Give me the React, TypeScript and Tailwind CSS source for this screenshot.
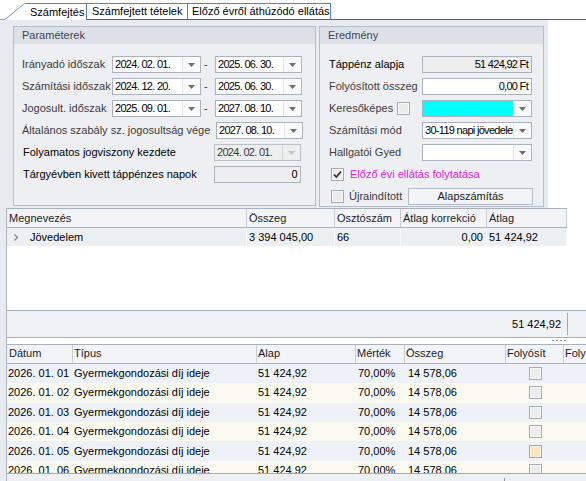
import type { ReactNode } from "react";

const DETAIL_ROWS = [
  { date: "2026. 01. 01", hot: false },
  { date: "2026. 01. 02", hot: false },
  { date: "2026. 01. 03", hot: false },
  { date: "2026. 01. 04", hot: false },
  { date: "2026. 01. 05", hot: true },
  { date: "2026. 01. 06", hot: false },
];

function DropArrow({ disabled }: { disabled?: boolean }) {
  return (
    <div
      className={`flex w-[18px] shrink-0 items-center justify-center border-l ${
        disabled ? "border-[#d3d6db] bg-[#eeeeee]" : "border-[#e4e6ea] bg-[#fafafa]"
      }`}
    >
      <svg width="7" height="4" viewBox="0 0 7 4">
        <path d="M0 0h7L3.5 4z" fill={disabled ? "#c4c4c4" : "#6e6e6e"} />
      </svg>
    </div>
  );
}

function Combo({
  value,
  className,
  disabled,
  fill = "bg-white",
}: {
  value?: string;
  className: string;
  disabled?: boolean;
  fill?: string;
}) {
  return (
    <div
      className={`flex h-[17px] shrink-0 border ${
        disabled ? "border-[#bcc1c8] text-[#3a3a3a]" : "border-[#abb2bc] text-black"
      } ${className}`}
    >
      <div
        className={`flex min-w-0 flex-1 items-center overflow-hidden whitespace-nowrap pl-[2px] tracking-[-0.7px] ${
          disabled ? "bg-[#eeeeee]" : fill
        }`}
      >
        {value}
      </div>
      <DropArrow disabled={disabled} />
    </div>
  );
}

function NumberBox({
  value,
  className,
  readOnly,
}: {
  value: string;
  className: string;
  readOnly?: boolean;
}) {
  return (
    <div
      className={`flex h-[17px] shrink-0 items-center justify-end border border-[#abb2bc] pr-[3px] tracking-[-0.7px] text-black ${
        readOnly ? "bg-[#eeeeee]" : "bg-white"
      } ${className}`}
    >
      {value}
    </div>
  );
}

function Check({ checked, hot }: { checked?: boolean; hot?: boolean }) {
  return (
    <div
      className={`flex h-[13px] w-[13px] shrink-0 items-center justify-center border ${
        hot
          ? "border-[#e39a3c] bg-[#fde6bd] shadow-[inset_0_0_0_1px_#fff4df]"
          : "border-[#a7acb3] bg-[#ececec] shadow-[inset_0_0_0_1px_#f8f8f8]"
      }`}
    >
      {checked && (
        <svg width="9" height="9" viewBox="0 0 9 9">
          <path d="M1 4.5l2.3 2.5L8 1.5" fill="none" stroke="#2b2b2b" strokeWidth="1.6" />
        </svg>
      )}
    </div>
  );
}

function GroupBox({
  title,
  className,
  children,
}: {
  title: string;
  className: string;
  children: ReactNode;
}) {
  return (
    <div className={`flex flex-col border border-[#b7bdc6] bg-[#edeff2] ${className}`}>
      <div className="flex h-[17px] shrink-0 items-center bg-[#dde1e7] pl-[8px] text-[#3e4550]">
        {title}
      </div>
      {children}
    </div>
  );
}

function TabStrip() {
  return (
    <div className="flex h-[20px] items-end bg-white">
      <div className="h-px w-[5px] bg-[#8fa2bf]" />
      <div className="flex h-[17px] items-stretch">
        <svg width="20" height="17" viewBox="0 0 20 17" className="shrink-0">
          <path d="M0 17L19.5 0.5H20V17z" fill="#ffffff" />
          <path d="M0 16.5L19.5 0.5" stroke="#7f95b8" strokeWidth="1" fill="none" />
        </svg>
        <div className="flex w-[62px] items-center border-t border-r border-[#5a7fbe] bg-white pl-[5px] text-black">
          Számfejtés
        </div>
      </div>
      <div className="flex h-[17px] w-[101px] items-center border-y border-r border-[#5a7fbe] border-b-[#3c63a6] bg-white pl-[5px] text-black">
        Számfejtett tételek
      </div>
      <div className="flex h-[17px] w-[143px] items-center border-y border-r border-[#5a7fbe] border-b-[#3c63a6] bg-white pl-[4px] text-black">
        Előző évről áthúzódó ellátás
      </div>
      <div className="h-px flex-1 bg-[#3c63a6]" />
    </div>
  );
}

function ParamsBox() {
  const periods = [
    ["Irányadó időszak", "2024. 02. 01.", "2025. 06. 30."],
    ["Számítási időszak", "2024. 12. 20.", "2025. 06. 30."],
    ["Jogosult. időszak", "2025. 09. 01.", "2027. 08. 10."],
  ];

  return (
    <GroupBox title="Paraméterek" className="h-[180px] w-[303px]">
      <div className="flex flex-col gap-[5px] pl-[8px] pr-[12px] pt-[12px]">
        {periods.map(([label, from, to]) => (
          <div key={label} className="flex h-[17px] items-center">
            <span className="w-[90px] whitespace-nowrap text-[#3c3c3c]">{label}</span>
            <Combo value={from} className="w-[89px]" />
            <span className="w-[14px] pl-[3px] text-[#3c3c3c]">-</span>
            <Combo value={to} className="w-[87px]" />
          </div>
        ))}
        <div className="flex h-[17px] items-center">
          <span className="flex-1 whitespace-nowrap text-[#3c3c3c]">
            Általános szabály sz. jogosultság vége
          </span>
          <Combo value="2027. 08. 10." className="w-[87px]" />
        </div>
        <div className="flex h-[17px] items-center">
          <span className="flex-1 whitespace-nowrap pl-[1px] text-black">
            Folyamatos jogviszony kezdete
          </span>
          <Combo value="2024. 02. 01." className="mr-[2px] w-[87px]" disabled />
        </div>
        <div className="flex h-[17px] items-center">
          <span className="flex-1 whitespace-nowrap pl-[1px] text-black">
            Tárgyévben kivett táppénzes napok
          </span>
          <NumberBox value="0" className="mr-[2px] w-[87px]" readOnly />
        </div>
      </div>
    </GroupBox>
  );
}

function ResultBox() {
  return (
    <GroupBox title="Eredmény" className="h-[181px] w-[225px]">
      <div className="flex flex-col pl-[9px] pr-[10px] pt-[12px]">
        <div className="flex flex-col gap-[5px]">
          <div className="flex h-[17px] items-center">
            <span className="w-[93px] whitespace-nowrap text-black">Táppénz alapja</span>
            <NumberBox value="51 424,92 Ft" className="w-[110px]" readOnly />
          </div>
          <div className="flex h-[17px] items-center">
            <span className="w-[93px] whitespace-nowrap text-[#3c3c3c]">Folyósított összeg</span>
            <NumberBox value="0,00 Ft" className="w-[110px]" />
          </div>
          <div className="flex h-[17px] items-center">
            <span className="w-[68px] whitespace-nowrap text-[#3c3c3c]">Keresőképes</span>
            <Check />
            <span className="w-[12px]" />
            <Combo className="w-[110px]" fill="bg-[#00ffff]" />
          </div>
          <div className="flex h-[17px] items-center">
            <span className="w-[93px] whitespace-nowrap text-[#3c3c3c]">Számítási mód</span>
            <Combo value="30-119 napi jövedelem" className="w-[110px]" />
          </div>
          <div className="flex h-[17px] items-center">
            <span className="w-[93px] whitespace-nowrap text-[#3c3c3c]">Hallgatói Gyed</span>
            <Combo className="w-[110px]" />
          </div>
        </div>
        <div className="mt-[7px] flex h-[13px] items-center gap-[6px] pl-[2px]">
          <Check checked />
          <span className="whitespace-nowrap text-[#dd1fdd]">Előző évi ellátás folytatása</span>
        </div>
        <div className="mt-[7px] flex h-[17px] items-center pl-[2px]">
          <Check />
          <span className="ml-[5px] whitespace-nowrap text-[#3c3c3c]">Újraindított</span>
          <button
            type="button"
            className="ml-auto flex h-[17px] w-[125px] items-center justify-center border border-[#b6bcc5] bg-[#f3f4f6] text-[#1c1c1c]"
          >
            Alapszámítás
          </button>
        </div>
      </div>
    </GroupBox>
  );
}

function SummaryGrid() {
  const head = "flex items-center border-r border-[#c8cdd5] pl-[2px]";
  const cell = "flex items-center border-r border-[#f8f9fa]";

  return (
    <div className="flex h-[130px] flex-col">
      <div className="flex h-[20px] w-[560px] border-y border-[#a8b0bb] bg-[#f3f4f7] text-[#1c1c1c]">
        <div className={`${head} w-[240px]`}>Megnevezés</div>
        <div className={`${head} w-[88px]`}>Összeg</div>
        <div className={`${head} w-[66px]`}>Osztószám</div>
        <div className={`${head} w-[86px]`}>Átlag korrekció</div>
        <div className={`${head} w-[80px]`}>Átlag</div>
      </div>
      <div className="flex h-[18px] w-[560px] bg-[#edf0f3] text-black">
        <div className={`${cell} w-[240px] pl-[7px]`}>
          <svg width="4" height="7" viewBox="0 0 4 7" className="mr-[12px]">
            <path d="M0.5 0.5L3.5 3.5L0.5 6.5" fill="none" stroke="#7a7a7a" strokeWidth="1.2" />
          </svg>
          Jövedelem
        </div>
        <div className={`${cell} w-[88px] pl-[2px]`}>3 394 045,00</div>
        <div className={`${cell} w-[66px] pl-[2px]`}>66</div>
        <div className={`${cell} w-[86px] justify-end pr-[3px]`}>0,00</div>
        <div className={`${cell} w-[80px] pl-[2px]`}>51 424,92</div>
      </div>
      <div className="h-[64px] bg-white" />
      <div className="flex h-[28px] border-y border-[#a8b0bb] bg-[#f1f2f6]">
        <div className="flex w-[560px] items-center justify-end pr-[6px] text-black">51 424,92</div>
        <div className="my-[2px] w-px bg-[#a2a8b1]" />
      </div>
    </div>
  );
}

function Splitter() {
  return (
    <div className="flex h-[6px] items-start justify-end bg-white pr-[20px] pt-[2px]">
      <div className="flex gap-[2px]">
        <span className="h-[1px] w-[2px] bg-[#8893a4]" />
        <span className="h-[1px] w-[2px] bg-[#8893a4]" />
        <span className="h-[1px] w-[2px] bg-[#8893a4]" />
        <span className="h-[1px] w-[2px] bg-[#8893a4]" />
      </div>
    </div>
  );
}

function DetailGrid() {
  const head = "flex shrink-0 items-center border-r border-[#c8cdd5]";

  return (
    <div className="flex h-[143px] flex-col">
      <div className="flex h-[20px] shrink-0 border-y border-[#a8b0bb] bg-[#f3f4f7] text-[#1c1c1c]">
        <div className={`${head} w-[66px] pl-[2px]`}>Dátum</div>
        <div className={`${head} w-[184px] pl-[1px]`}>Típus</div>
        <div className={`${head} w-[99px] pl-[1px]`}>Alap</div>
        <div className={`${head} w-[49px] pl-[1px]`}>Mérték</div>
        <div className={`${head} w-[101px] pl-[1px]`}>Összeg</div>
        <div className={`${head} w-[58px] pl-[1px]`}>Folyósít</div>
        <div className={`${head} w-[60px] pl-[1px]`}>Folyósítva</div>
      </div>
      <div className="h-[109px] shrink-0 overflow-hidden">
        {DETAIL_ROWS.map((row, index) => (
          <div
            key={row.date}
            className={`flex h-[19.4px] whitespace-nowrap text-black ${
              index % 2 === 0 ? "bg-[#eef2f8]" : "bg-[#fafaf1]"
            }`}
          >
            <div className="flex w-[66px] shrink-0 items-center pl-[1px]">{row.date}</div>
            <div className="flex w-[184px] shrink-0 items-center pl-[1px]">Gyermekgondozási díj ideje</div>
            <div className="flex w-[99px] shrink-0 items-center pl-[1px]">51 424,92</div>
            <div className="flex w-[49px] shrink-0 items-center pl-[2px]">70,00%</div>
            <div className="flex w-[101px] shrink-0 items-center pl-[3px]">14 578,06</div>
            <div className="flex w-[58px] shrink-0 items-center justify-center">
              <Check hot={row.hot} />
            </div>
          </div>
        ))}
      </div>
      <div className="h-[8px] shrink-0 border-t border-[#a2aab5] bg-[#eff0f3] pl-[497px] pt-[4px]">
        <div className="h-[4px] w-px bg-[#8e949c]" />
      </div>
    </div>
  );
}

export default function App() {
  return (
    <div className="h-[481px] w-[586px] overflow-hidden bg-white font-['Liberation_Sans',Arial,sans-serif] text-[11px] leading-none text-[#1c1c1c]">
      <TabStrip />
      <div className="flex h-[188px]">
        <div className="flex w-[548px] items-start gap-[3px] bg-[#e8ebf0] pl-[13px] pt-[6px]">
          <ParamsBox />
          <ResultBox />
        </div>
        <div className="flex-1 bg-white" />
      </div>
      <div className="flex h-[273px]">
        <div className="w-[7px] shrink-0 border-r border-[#aeb5c0] bg-[#e8ebf0]" />
        <div className="flex min-w-0 flex-1 flex-col overflow-hidden">
          <SummaryGrid />
          <Splitter />
          <DetailGrid />
        </div>
      </div>
    </div>
  );
}
